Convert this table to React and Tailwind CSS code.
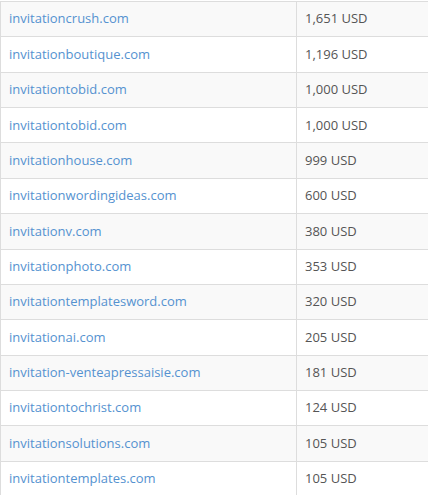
import React from "react";

const rows = [
  ["invitationcrush.com", "1,651 USD"],
  ["invitationboutique.com", "1,196 USD"],
  ["invitationtobid.com", "1,000 USD"],
  ["invitationtobid.com", "1,000 USD"],
  ["invitationhouse.com", "999 USD"],
  ["invitationwordingideas.com", "600 USD"],
  ["invitationv.com", "380 USD"],
  ["invitationphoto.com", "353 USD"],
  ["invitationtemplatesword.com", "320 USD"],
  ["invitationai.com", "205 USD"],
  ["invitation-venteapressaisie.com", "181 USD"],
  ["invitationtochrist.com", "124 USD"],
  ["invitationsolutions.com", "105 USD"],
  ["invitationtemplates.com", "105 USD"],
];

export default function App() {
  return (
    <div
      className="w-[428px] h-[495px] overflow-hidden bg-white"
      style={{ fontFamily: '"Open Sans", "Liberation Sans", sans-serif' }}
    >
      <div className="mt-px border-l border-[#dddddd]">
        {rows.map(([d, p], i) => (
          <div
            key={i}
            className={`flex h-[35.36px] border-t border-[#dddddd] text-[13px] ${
              i % 2 === 0 ? "bg-[#f9f9f9]" : "bg-white"
            }`}
          >
            <div className="w-[296px] shrink-0 flex items-center pl-2 border-r border-[#dddddd] text-[#5592d0]">
              {d}
            </div>
            <div className="flex-1 flex items-center pl-2 text-[#555555]">{p}</div>
          </div>
        ))}
      </div>
    </div>
  );
}
